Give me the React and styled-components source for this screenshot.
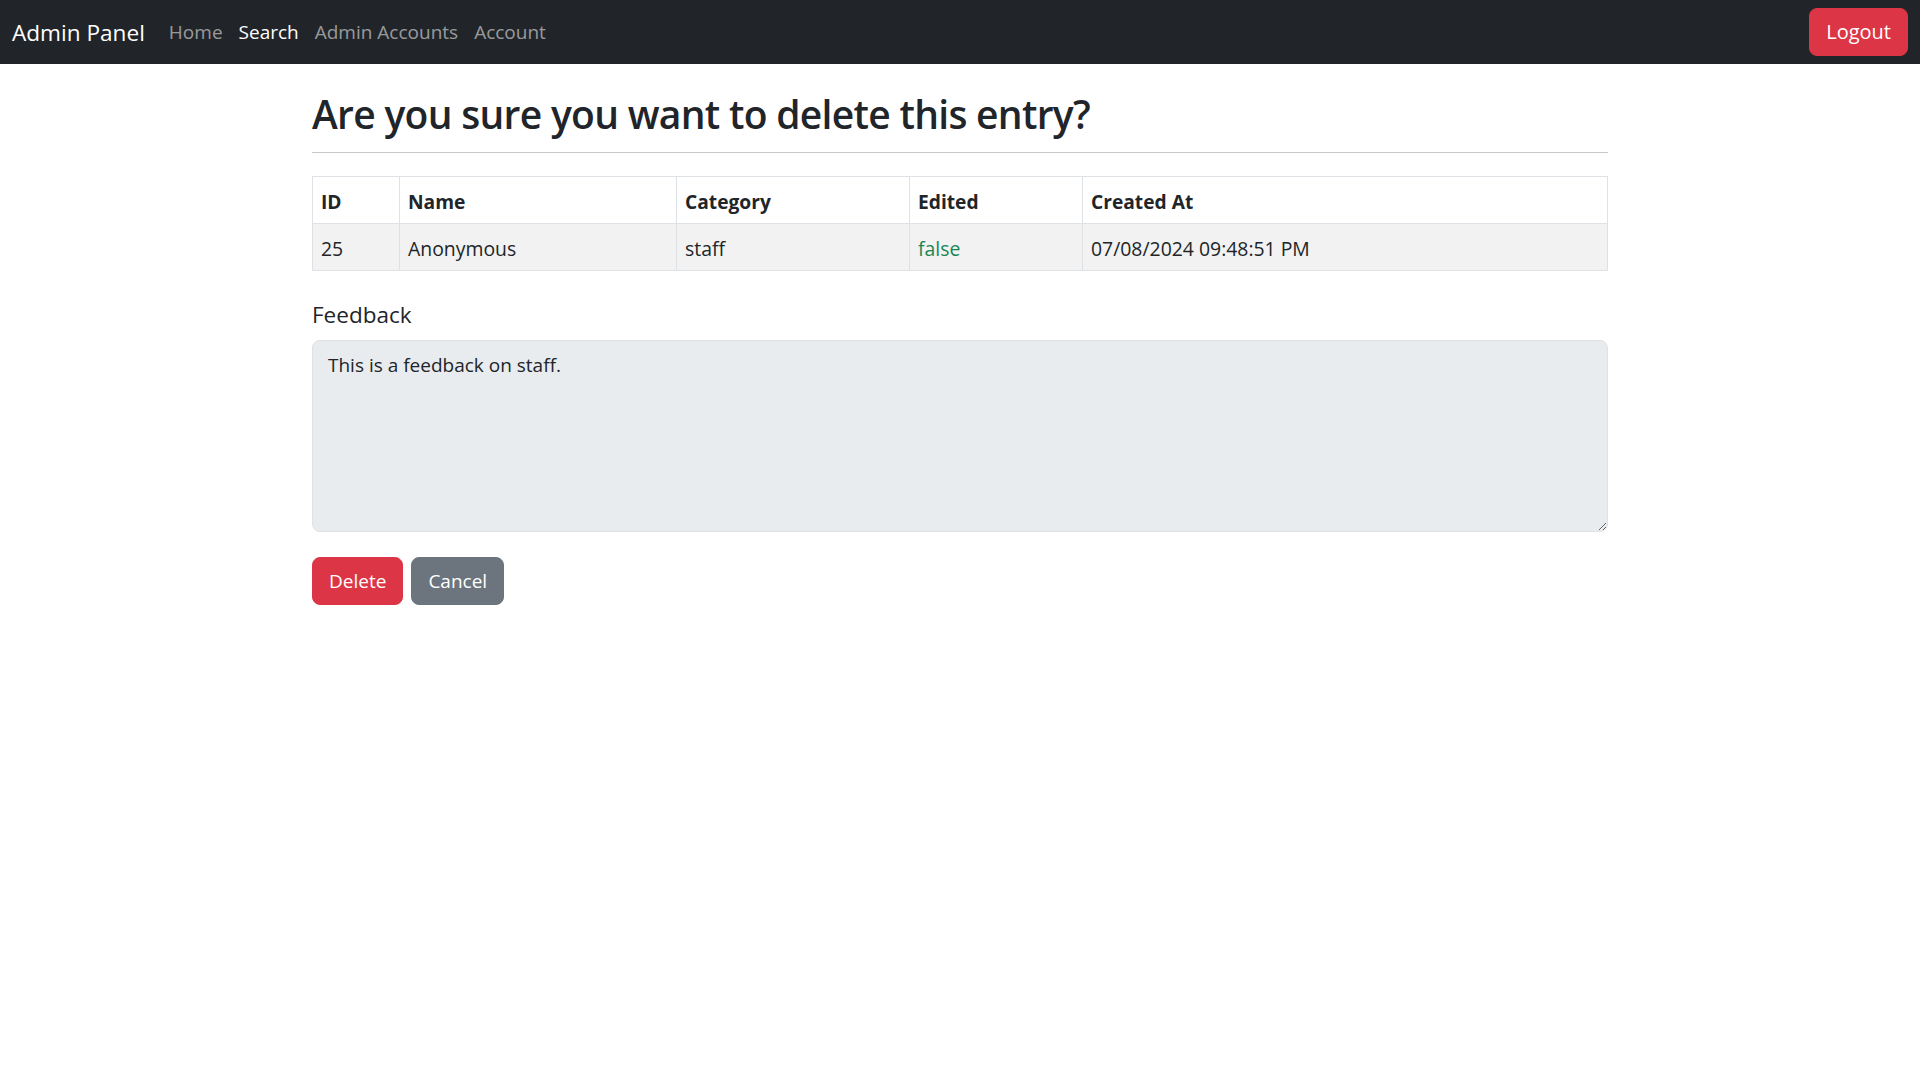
import React from 'react'
import styled, { createGlobalStyle } from "styled-components"

const GlobalStyle = createGlobalStyle`
  * { box-sizing: border-box; }
  body {
    margin: 0;
    font-family: "Open Sans", "Noto Sans", sans-serif;
    color: #212529;
    background: #fff;
  }
`;

const App = () => {
  return (
    <>
      <GlobalStyle />
      <Navbar>
        <Brand>Admin Panel</Brand>
        <NavList>
          <NavItem>Home</NavItem>
          <NavItem active>Search</NavItem>
          <NavItem>Admin Accounts</NavItem>
          <NavItem>Account</NavItem>
        </NavList>
        <Button variant="danger" wide>Logout</Button>
      </Navbar>
      <Container>
        <Title>Are you sure you want to delete this entry?</Title>
        <Rule />
        <Table>
          <colgroup>
            <col style={{ width: 87 }} />
            <col style={{ width: 277 }} />
            <col style={{ width: 233 }} />
            <col style={{ width: 173 }} />
            <col />
          </colgroup>
          <thead>
            <tr>
              <Th>ID</Th>
              <Th>Name</Th>
              <Th>Category</Th>
              <Th>Edited</Th>
              <Th>Created At</Th>
            </tr>
          </thead>
          <tbody>
            <Row>
              <Td>25</Td>
              <Td>Anonymous</Td>
              <Td>staff</Td>
              <Td success>false</Td>
              <Td>07/08/2024 09:48:51 PM</Td>
            </Row>
          </tbody>
        </Table>
        <Label htmlFor="feedback">Feedback</Label>
        <TextArea id="feedback" readOnly defaultValue="This is a feedback on staff." />
        <Actions>
          <Button variant="danger">Delete</Button>
          <Button variant="secondary">Cancel</Button>
        </Actions>
      </Container>
    </>
  );
}

export default App

const Navbar = styled.nav`
  height: 64px;
  background: #212529;
  display: flex;
  align-items: center;
  padding: 0 12px;
`;
const Brand = styled.a`
  font-size: 22.6px;
  color: #fff;
  margin-right: 16px;
  text-decoration: none;
`;
const NavList = styled.div`
  display: flex;
  align-items: center;
  flex: 1;
`;
const NavItem = styled.a`
  font-size: 19px;
  padding: 8px 8px;
  color: ${(p) => (p.active ? "#fff" : "rgba(255, 255, 255, 0.55)")};
  text-decoration: none;
  :hover {
    cursor: pointer;
  }
`;
const colors = {
  danger: "#dc3545",
  secondary: "#6c757d",
};
const Button = styled.button`
  font-family: inherit;
  font-size: ${(p) => (p.wide ? "20px" : "19px")};
  line-height: 30px;
  padding: 8px 16px;
  border: 1px solid ${(p) => colors[p.variant]};
  background: ${(p) => colors[p.variant]};
  color: #fff;
  border-radius: 8px;
  :hover {
    cursor: pointer;
  }
`;
const Container = styled.main`
  width: 1320px;
  margin: 0 auto;
  padding: 26px 12px 0;
`;
const Title = styled.h1`
  font-size: 39px;
  font-weight: 600;
  letter-spacing: -0.7px;
  line-height: 48px;
  margin: 0;
`;
const Rule = styled.hr`
  border: none;
  border-top: 1px solid #c8c9ca;
  margin: 14px 0 23px;
`;
const Table = styled.table`
  width: 100%;
  table-layout: fixed;
  border-collapse: collapse;
  border: 1px solid #dee2e6;
  font-size: 19.4px;
  line-height: 30px;
  margin-bottom: 29px;
`;
const Th = styled.th`
  text-align: left;
  font-weight: 700;
  font-size: 19.2px;
  padding: 10px 8px 6px;
  border: 1px solid #dee2e6;
`;
const Row = styled.tr`
  background: #f2f2f2;
`;
const Td = styled.td`
  padding: 10px 8px 6px;
  border: 1px solid #dee2e6;
  color: ${(p) => (p.success ? "#198754" : "#212529")};
`;
const Label = styled.label`
  display: block;
  font-size: 22.5px;
  line-height: 30px;
  margin-bottom: 10px;
`;
const TextArea = styled.textarea`
  display: block;
  width: 100%;
  height: 192px;
  font-family: inherit;
  font-size: 19px;
  line-height: 30px;
  padding: 9px 15px;
  color: #212529;
  background: #e9ecef;
  border: 1px solid #dee2e6;
  border-radius: 8px;
  outline: none;
  resize: vertical;
  margin-bottom: 25px;
`;
const Actions = styled.div`
  display: flex;
  gap: 8px;
`;
